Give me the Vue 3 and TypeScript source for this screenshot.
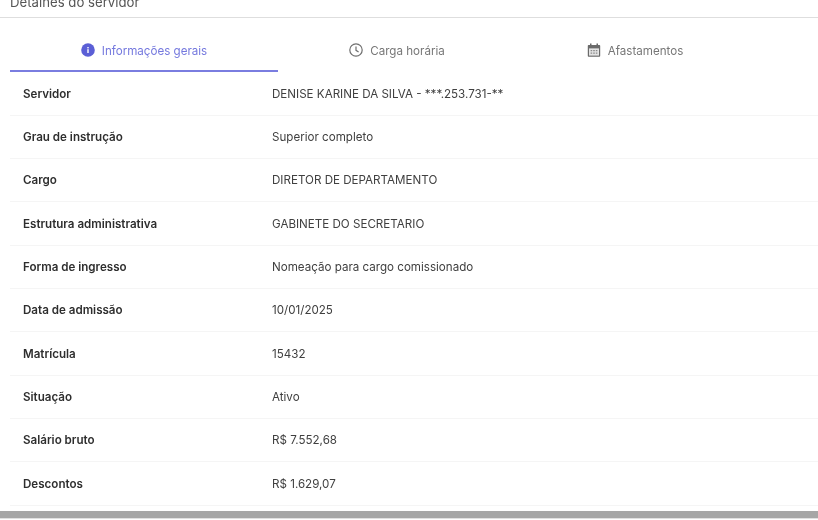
<template>
  <section class="details">
    <header class="details-header">
      <h1>Detalhes do servidor</h1>
    </header>

    <nav class="tabs">
      <button
        v-for="tab in tabs"
        :key="tab.id"
        class="tab"
        :class="{ active: tab.id === activeTab }"
        type="button"
      >
        <svg v-if="tab.id === 'geral'" class="tab-icon" viewBox="0 0 14 14">
          <circle cx="7" cy="7" r="6.8" fill="#5b5fd6" />
          <rect x="6.3" y="6.2" width="1.4" height="3.8" fill="#fff" />
          <rect x="6.3" y="4" width="1.4" height="1.4" fill="#fff" />
        </svg>
        <svg v-else-if="tab.id === 'carga'" class="tab-icon" viewBox="0 0 14 14" fill="none">
          <circle cx="7" cy="7" r="6.2" stroke="#6f6f6f" stroke-width="1.2" />
          <path d="M7 3.4V7.3L9.6 8.9" stroke="#6f6f6f" stroke-width="1.2" />
        </svg>
        <svg v-else class="tab-icon" viewBox="0 0 14 14">
          <path d="M3 0.5h1.5V2h5V0.5H11V2h1.2c.6 0 1 .4 1 1v9.7c0 .6-.4 1-1 1H1.8c-.6 0-1-.4-1-1V3c0-.6.4-1 1-1H3z" fill="#6a6a6a" />
          <rect x="2" y="5.4" width="10" height="7.2" fill="#e4e4e4" />
          <path d="M3.6 7h1.6v1.3H3.6zM6.2 7h1.6v1.3H6.2zM8.8 7h1.6v1.3H8.8zM3.6 9.5h1.6v1.3H3.6zM6.2 9.5h1.6v1.3H6.2zM8.8 9.5h1.6v1.3H8.8z" fill="#8a8a8a" />
        </svg>
        <span>{{ tab.label }}</span>
      </button>
    </nav>

    <dl class="rows">
      <div v-for="row in rows" :key="row.label" class="row">
        <dt>{{ row.label }}</dt>
        <dd>{{ row.value }}</dd>
      </div>
    </dl>

    <div class="bottom-bar"></div>
  </section>
</template>

<script setup lang="ts">
interface Tab {
  id: string;
  label: string;
}

interface Row {
  label: string;
  value: string;
}

const activeTab = 'geral';

const tabs: Tab[] = [
  { id: 'geral', label: 'Informações gerais' },
  { id: 'carga', label: 'Carga horária' },
  { id: 'afastamentos', label: 'Afastamentos' }
];

const rows: Row[] = [
  { label: 'Servidor', value: 'DENISE KARINE DA SILVA - ***.253.731-**' },
  { label: 'Grau de instrução', value: 'Superior completo' },
  { label: 'Cargo', value: 'DIRETOR DE DEPARTAMENTO' },
  { label: 'Estrutura administrativa', value: 'GABINETE DO SECRETARIO' },
  { label: 'Forma de ingresso', value: 'Nomeação para cargo comissionado' },
  { label: 'Data de admissão', value: '10/01/2025' },
  { label: 'Matrícula', value: '15432' },
  { label: 'Situação', value: 'Ativo' },
  { label: 'Salário bruto', value: 'R$ 7.552,68' },
  { label: 'Descontos', value: 'R$ 1.629,07' }
];
</script>

<style scoped>
.details {
  width: 818px;
  height: 520px;
  overflow: hidden;
  background: #ffffff;
  font-family: Inter, "Liberation Sans", sans-serif;
  color: #3a3a3a;
  filter: blur(0.4px);
}

.details-header {
  height: 17px;
  padding-left: 10px;
  border-bottom: 1px solid #dedede;
  overflow: hidden;
}

.details-header h1 {
  margin: -6px 0 0;
  font-size: 13.2px;
  line-height: 16px;
  font-weight: 400;
  color: #555555;
}

.tabs {
  display: grid;
  grid-template-columns: 268px 238px 238px;
  margin: 0 0 0 10px;
  height: 54.5px;
}

.tab {
  display: flex;
  align-items: center;
  justify-content: center;
  gap: 7px;
  height: 54px;
  padding: 13px 0 0;
  border: 0;
  border-bottom: 2px solid transparent;
  background: none;
  font: inherit;
  font-size: 11.6px;
  color: #777777;
}

.tab.active {
  border-bottom-color: #7a7de0;
  color: #7478de;
}

.tab-icon {
  width: 14px;
  height: 14px;
  flex: none;
  margin-top: -2px;
}

.rows {
  margin: 0 0 0 10px;
}

.row {
  display: grid;
  grid-template-columns: 249px 1fr;
  align-items: center;
  height: 43.33px;
  box-sizing: border-box;
  padding-left: 13px;
  border-bottom: 1px solid #f5f5f5;
  font-size: 11.6px;
}

.row dt {
  font-weight: 600;
  color: #2e2e2e;
}

.row dd {
  margin: 0;
  color: #404040;
}

.bottom-bar {
  height: 7px;
  margin-top: 5.5px;
  background: #a6a6a6;
  border-bottom: 1px solid #e0e0e0;
}
</style>

<style>
html,
body {
  margin: 0;
  background: #ffffff;
}
</style>
